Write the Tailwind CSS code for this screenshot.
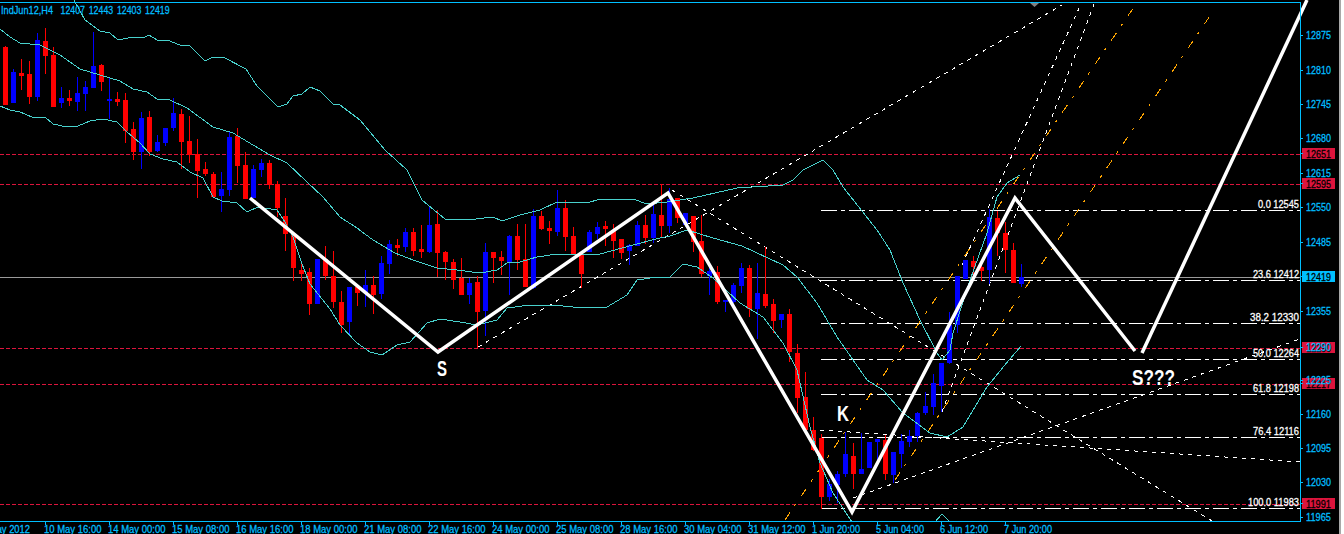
<!DOCTYPE html>
<html lang="en">
<head>
    <meta charset="UTF-8">
    <title>IndJun12,H4</title>
    <script src="https://cdn.jsdelivr.net/npm/@tailwindcss/browser@4"></script>
</head>
<body class="bg-white overflow-hidden">
    <div class="flex w-[1344px] h-[534px]">
        <svg id="chart" class="block w-[1339px] h-[534px] bg-black shrink-0 font-['Liberation_Sans',sans-serif] text-[11.5px]" viewBox="0 0 1339 534" xmlns="http://www.w3.org/2000/svg"></svg>
        <div class="w-[2px] h-full bg-[#a8a8a8]"></div>
    </div>

    <script>
        const chart = document.getElementById('chart');
        const NS = 'http://www.w3.org/2000/svg';

        function add(tag, attrs, text) {
            const el = document.createElementNS(NS, tag);
            for (const k in attrs) el.setAttribute(k, attrs[k]);
            if (text !== undefined) el.textContent = text;
            chart.appendChild(el);
            return el;
        }

        function label(x, y, text, width, cls) {
            return add('text', { x: x, y: y, textLength: width, lengthAdjust: 'spacingAndGlyphs', class: cls }, text);
        }

        function line(points, color, dash, width) {
            const attrs = { points: points.map(p => p.join(',')).join(' '), fill: 'none', stroke: color, 'stroke-width': width || 1 };
            if (dash) attrs['stroke-dasharray'] = dash;
            if (!width) attrs['shape-rendering'] = 'crispEdges';
            return add('polyline', attrs);
        }

        // horizontal levels
        [154.5, 184.5, 348.5, 384.5, 504.5].forEach(y => line([[0, y], [1300, y]], '#dc143c', '4 2'));
        line([[0, 277.5], [1300, 277.5]], '#9a9a9a');

        // fibo levels
        [210.5, 280.5, 323.5, 359.5, 394.5, 437.5, 508.5].forEach(y => line([[821, y], [1300, y]], '#ffffff', '16 4 4 4'));

        // pitchfork and trend lines
        line([[478, 347], [1062, 5]], '#ffffff', '4 5');
        line([[672, 190], [1212, 521]], '#ffffff', '4 5');
        line([[820, 430], [1300, 462]], '#ffffff', '4 5');
        line([[853, 498], [1300, 339]], '#ffffff', '4 5');
        line([[942, 412], [1094, 4]], '#ffffff', '4 5');
        line([[962, 265], [1081, 4]], '#ffffff', '4 5');
        line([[785, 520], [1134, 7]], '#ffa500', '9 8 3 9');
        line([[895, 480], [1214, 10]], '#ffa500', '9 8 3 9');

        // candles, measured off a 3x crop: [colour, body top, body bottom, wick top, wick bottom]
        const R = '#ff0000', B = '#0000ff';
        const first = [
            [R,140,315,138,315],[B,215,309,208,309],[R,219,228,177,270],[R,222,291,183,312],[B,120,291,99,303],[R,123,168,84,222],
            [R,165,321,141,321],[B,294,309,261,324],[R,294,303,270,318],[B,279,306,231,333],[B,261,282,243,333],[B,198,264,96,264],
            [R,195,246,192,273],[B,297,303,234,357],[R,297,306,276,318],[R,300,393,279,429],[R,387,456,366,480],[B,354,456,336,507],
            [R,351,456,333,468],[B,426,453,405,456],[B,384,429,384,438],[B,339,384,294,393],[R,342,426,327,507],[R,423,465,348,489],
            [R,462,513,417,594],[R,507,522,486,528],[R,522,591,516,591],[B,567,588,516,636],[B,411,570,396,588],[R,408,498,384,549],
            [R,495,597,456,597],[B,507,594,495,594],[B,489,510,477,531],[R,489,555,480,567],[R,552,624,543,651],[R,648,702,594,753],
            [R,702,804,702,843],[R,810,822,792,843],[R,816,912,804,945],[B,777,912,777,912],[R,777,828,738,840],[R,828,906,753,924]
        ];
        const second = [
            [R,396,465,363,489],[B,351,456,351,495],[R,351,369,351,408],[B,345,369,300,411],[R,345,375,318,432],[B,279,372,258,387],
            [B,222,282,210,312],[R,225,234,207,258],[B,186,231,174,246],[R,186,243,174,258],[R,237,246,165,264],[B,165,246,111,249],
            [R,162,249,120,321],[R,246,276,243,330],[R,276,330,267,357],[R,324,375,264,375],[B,339,375,324,402],[R,336,426,318,534],
            [B,246,423,219,498],[R,246,264,246,339],[R,261,273,243,315],[B,198,276,195,375],[R,198,270,162,300],[R,267,351,162,351],
            [B,138,354,117,357],[R,138,177,123,180],[R,174,183,153,222],[B,114,186,60,198],[R,114,201,90,243],[R,198,252,171,252],
            [R,252,312,252,354],[B,186,246,180,246],[B,171,192,156,207],[R,168,177,153,228],[R,180,213,162,264],[R,207,249,207,267],
            [B,225,243,222,285],[B,165,228,153,228],[R,165,204,135,222],[B,132,204,102,219],[R,135,168,42,204],[B,87,168,54,189],
            [R,84,144,84,159],[B,130,165,130,170],[R,138,216,138,246],[R,213,312,135,321],[B,303,318,285,375],[R,306,396,288,402],
            [B,390,396,390,426],[B,345,396,339,399],[B,294,348,280,370],[R,294,417,285,441],[B,369,417,279,507],[R,372,408,231,414],
            [R,402,453,387,489],[B,432,450,432,474],[R,432,546,417,576],[R,549,684,522,729],[R,681,780,606,780],[R,780,840,741,843],
            [R,804,981,792,1017],[B,942,981,927,993],[B,912,945,903,1000],[B,852,912,786,921],[R,858,912,819,957],[B,897,912,789,912],
            [B,816,894,816,894],[B,807,816,807,870],[R,810,912,795,930],[B,846,915,846,939],[B,813,852,792,894],[B,798,816,780,831],
            [B,729,798,726,816],[B,708,729,666,735],[B,639,711,612,735],[B,579,648,579,726],[B,465,579,426,582],[B,318,465,318,489],
            [B,270,327,270,327],[R,273,292,258,330],[R,291,303,276,333],[B,141,300,117,342],[R,144,189,123,258],[R,189,240,156,309],
            [R,240,339,219,339],[B,321,342,282,351]
        ];

        function candle(i, row, offset) {
            const top = v => Math.round(v / 3) + offset;
            add('rect', { x: 5 + 8 * i, y: top(row[3]), width: 1, height: top(row[4]) - top(row[3]), fill: row[0] });
            add('rect', { x: 3 + 8 * i, y: top(row[1]), width: 5, height: top(row[2]) - top(row[1]), fill: row[0] });
        }
        first.forEach((row, i) => candle(i, row, 0));
        second.forEach((row, i) => candle(i + first.length, row, 170));

        // bollinger bands
        const TEAL = '#48d1cc';
        line([[74,0],[85,20],[100,31],[110,33],[118,40],[133,37],[143,38],[149,35],[157,40],[167,40],[180,45],[190,46],[205,61],[213,57],[223,57],[246,69],[257,86],[278,107],[287,104],[293,96],[302,94],[310,87],[320,91],[333,104],[340,105],[360,120],[385,150],[407,170],[422,200],[445,219],[467,220],[493,217],[502,221],[520,215],[540,210],[557,202],[587,203],[600,199],[633,199],[647,204],[667,202],[693,198],[737,188],[783,185],[793,180],[803,170],[823,160],[833,170],[843,187],[877,230],[890,250],[903,283],[920,320],[937,353],[942,360],[950,350],[953,333],[970,280],[987,233],[997,197],[1007,183],[1020,175]], TEAL);
        line([[0,29],[10,37],[20,43],[40,45],[60,55],[80,69],[100,75],[120,81],[133,89],[147,92],[157,99],[170,100],[187,108],[213,127],[233,133],[253,145],[270,155],[287,163],[307,182],[323,197],[340,217],[357,228],[373,240],[395,253],[413,260],[437,268],[457,270],[480,273],[497,270],[507,263],[520,262],[537,257],[557,254],[600,254],[633,245],[660,238],[670,236],[687,230],[713,238],[742,246],[783,265],[797,277],[817,303],[837,337],[867,380],[883,390],[903,413],[930,433],[947,437],[963,427],[987,387],[1004,366],[1021,346]], TEAL);
        line([[0,106],[10,110],[20,112],[32,117],[45,117],[53,124],[67,127],[78,126],[90,121],[103,119],[117,122],[127,132],[140,143],[150,154],[163,159],[177,162],[190,172],[203,178],[213,197],[222,201],[237,203],[247,212],[258,207],[277,210],[285,222],[293,237],[302,264],[310,284],[330,309],[340,325],[357,343],[370,352],[382,355],[397,345],[410,342],[427,323],[440,319],[460,322],[477,325],[497,320],[507,308],[530,305],[553,305],[583,308],[607,307],[627,295],[637,280],[657,277],[670,277],[683,264],[697,267],[713,278],[740,303],[763,317],[783,343],[797,370],[810,427],[820,463],[833,493],[852,522]], TEAL);
        line([[935,522],[942,514],[950,522]], TEAL);

        // hand drawn wave
        line([[250,198],[438,352],[668,193],[852,512],[1015,198],[1135,351]], '#ffffff', null, 3.5);
        line([[1142,353],[1307,0]], '#ffffff', null, 3.5);
        add('polygon', { points: '1030,3 1039,3 1034.5,7', fill: '#808080' });

        // frame
        add('rect', { x: 0, y: 2, width: 1301, height: 1, fill: '#00bfff' });
        add('rect', { x: 1300, y: 2, width: 1, height: 520, fill: '#00bfff' });
        add('rect', { x: 0, y: 521, width: 1301, height: 1, fill: '#00bfff' });

        const BLUE_TEXT = 'fill-[#00bfff] stroke-[#00bfff] stroke-[0.3px]';
        const WHITE_TEXT = 'fill-white stroke-white stroke-[0.3px]';

        // header
        label(1, 14, 'IndJun12,H4', 52, BLUE_TEXT);
        ['12407', '12443', '12403', '12419'].forEach((v, i) => label(60.5 + 28.2 * i, 14, v, 24.5, BLUE_TEXT));

        // time axis
        label(-19, 533, '9 May 2012', 49, BLUE_TEXT);
        const times = ['10 May 16:00', '14 May 00:00', '15 May 08:00', '16 May 16:00', '18 May 00:00', '21 May 08:00', '22 May 16:00', '24 May 00:00', '25 May 08:00', '28 May 16:00', '30 May 04:00', '31 May 12:00', '1 Jun 20:00', '5 Jun 04:00', '6 Jun 12:00', '7 Jun 20:00'];
        times.forEach((t, i) => {
            const x = 45 + 64 * i;
            add('rect', { x: x, y: 522, width: 1, height: 3, fill: '#00bfff' });
            label(x - 1, 533, t, t.length === 12 ? 57.5 : 48, BLUE_TEXT);
        });

        // order tags, axis labels go over them
        [[148, '12651', 157.5, '#dc143c'], [178, '12595', 187.5, '#dc143c'], [342, '12290', 351.5, '#dc143c'], [378, '12217', 387.5, '#dc143c'], [498, '11991', 507.5, '#dc143c'], [271, '12419', 280.5, '#00bfff']].forEach(tag => {
            add('rect', { x: 1302, y: tag[0], width: 33, height: 11, fill: tag[3] });
            label(1306, tag[2], tag[1], 25, 'fill-black stroke-black stroke-[0.3px]');
            add('rect', { x: 1300, y: tag[0] + 5, width: 3, height: 1, fill: '#00bfff' });
        });
        [[35, '12875'], [70, '12810'], [104, '12745'], [138, '12680'], [173, '12615'], [207, '12550'], [242, '12485'], [311, '12355'], [347, '12290'], [380, '12225'], [414, '12160'], [448, '12095'], [482, '12030'], [517, '11965']].forEach(a => {
            add('rect', { x: 1300, y: a[0], width: 3, height: 1, fill: '#00bfff' });
            label(1306, a[0] + 3.5, a[1], 25, BLUE_TEXT);
        });

        // fibo labels
        [[1258, 208, '0.0 12545'], [1253, 278, '23.6 12412'], [1250, 321, '38.2  12330'], [1253, 357, '50.0 12264'], [1253, 392, '61.8 12198'], [1253, 435, '76.4 12116'], [1248, 506, '100.0 11983']].forEach(f => {
            label(f[0], f[1], f[2], 1299 - f[0], WHITE_TEXT).setAttribute('xml:space', 'preserve');
        });

        // wave labels
        const BIG = 'fill-white text-[22px] font-bold';
        label(437, 376, 'S', 10, BIG);
        label(837, 421, 'K', 12, BIG);
        label(1132, 385, 'S???', 43, BIG);
    </script>
</body>
</html>
